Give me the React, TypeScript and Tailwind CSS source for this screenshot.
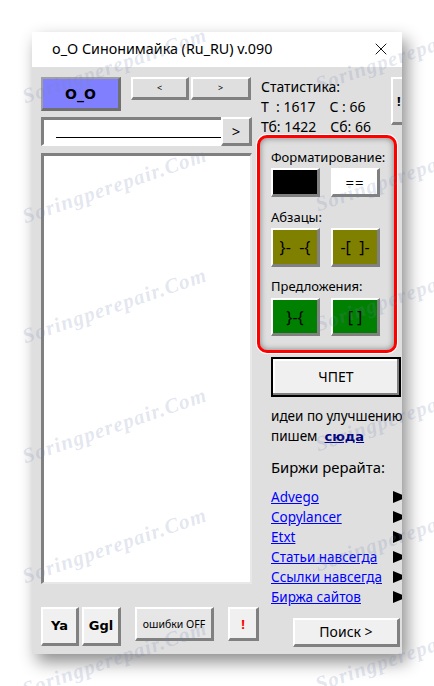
import { X } from 'lucide-react'

const raised =
  'border-t-2 border-l-2 border-r-[3px] border-b-[3px] border-t-white border-l-white border-r-[#808080] border-b-[#808080] flex items-center justify-center shrink-0'

const links = ['Advego', 'Copylancer', 'Etxt', 'Статьи навсегда', 'Ссылки навсегда', 'Биржа сайтов']

const marks = [
  'left-[23px] top-[85px]',
  'left-[23px] top-[205px]',
  'left-[23px] top-[325px]',
  'left-[23px] top-[445px]',
  'left-[23px] top-[565px]',
  'left-[23px] top-[678px]',
  'left-[316px] top-[73px]',
  'left-[316px] top-[193px]',
  'left-[316px] top-[313px]',
  'left-[316px] top-[433px]',
  'left-[316px] top-[553px]',
  'left-[316px] top-[673px]',
]

export default function App() {
  return (
    <div className="relative h-[686px] w-[434px] overflow-hidden bg-white pt-8 pl-8 font-['Noto_Sans',sans-serif] text-[13px] leading-5 text-black">
      <div className="flex h-[622px] w-[370px] flex-col bg-[#dfdfdf] shadow-[5px_8px_16px_rgba(0,0,0,0.45)]">
        <div className="flex h-[35px] shrink-0 items-center justify-between bg-white pr-[11px] pl-5 text-[14.3px]">
          <span className="-mt-[2px]">o_O Синонимайка (Ru_RU) v.090</span>
          <X size={20} strokeWidth={1.1} className="-mt-[2px]" />
        </div>

        <div className="flex min-h-0 flex-1 overflow-hidden pt-[10px] pb-2 pl-[9px]">
          {/* left column */}
          <div className="flex w-[211px] shrink-0 flex-col">
            <div className="flex gap-[10px]">
              <button className="flex h-[34px] w-[80px] shrink-0 items-center justify-center border-t-2 border-l-2 border-r-[3px] border-b-[3px] border-t-[#a0a0a0] border-l-[#a0a0a0] border-r-[#707070] border-b-[#707070] bg-[#8080ff] font-['DejaVu_Sans',sans-serif] text-[14px] font-bold">
                O_O
              </button>
              <div className="flex h-[23px] gap-[2px] text-[9px]">
                <button className={`${raised} w-[58px]`}>&lt;</button>
                <button className={`${raised} w-[60px]`}>&gt;</button>
              </div>
            </div>

            <div className="mt-[6px] flex h-[29px]">
              <div className="flex flex-1 items-end border-t-[3px] border-l-[3px] border-b-2 border-t-[#808080] border-l-[#808080] border-b-white bg-white pb-[6px] pl-[12px]">
                <div className="h-[1px] w-full bg-black" />
              </div>
              <button className={`${raised} w-[31px] text-[15px]`}>&gt;</button>
            </div>

            <div className="mt-[7px] h-[431px] border-t-[3px] border-l-[3px] border-r-2 border-b-2 border-t-[#808080] border-l-[#808080] border-r-[#e8e8e8] border-b-[#e8e8e8] bg-white" />

            <div className="mt-[23px] flex items-start">
              <button className={`${raised} h-[39px] w-[38px] bg-[#f0f0f0] font-['DejaVu_Sans',sans-serif] font-bold`}>Ya</button>
              <button className={`${raised} ml-[3px] h-[39px] w-[39px] bg-[#f0f0f0] font-['DejaVu_Sans',sans-serif] font-bold`}>Ggl</button>
              <button className={`${raised} ml-[14px] h-[34px] w-[79px] bg-[#e6e6e6] text-[10.5px]`}>ошибки OFF</button>
              <button className={`${raised} ml-[14px] h-[34px] w-[31px] bg-[#f0f0f0] font-bold text-[#ff0000]`}>!</button>
            </div>
          </div>

          {/* right column */}
          <div className="ml-[9px] flex w-[141px] shrink-0 flex-col">
            <div className="relative h-[48px] w-[130px] shrink-0 text-[14px] whitespace-pre">
              <p>Статистика:</p>
              <p>Т  : 1617   <span className="ml-[3px]">С : 66</span></p>
              <p>Тб: 1422   <span className="ml-[3px]">Сб: 66</span></p>
              <button className="absolute top-0 left-[130px] flex h-[48px] w-[30px] items-center border-t-2 border-l-2 border-b-[3px] border-t-white border-l-white border-b-[#808080] pl-[4px] text-[13px] font-bold">
                !
              </button>
            </div>

            <div className="mt-[10px] -ml-[4px] h-[218px] w-[140px] shrink-0 rounded-[10px] border-[3px] border-[#ff0000] pt-[9px] pl-[11px] shadow-[0_0_0_1px_#fff,inset_0_0_6px_rgba(0,0,0,0.45)]">
              <p>Форматирование:</p>
              <div className="mt-[1px] flex gap-[11px]">
                <button className={`${raised} h-[29px] w-[49px] bg-black`} />
                <button className={`${raised} h-[29px] w-[49px] bg-white text-[15px] tracking-[1px]`}>==</button>
              </div>
              <p className="mt-[10px]">Абзацы:</p>
              <div className="mt-[1px] flex gap-[11px]">
                <button className={`${raised} h-[39px] w-[49px] bg-[#808000] text-[16px] whitespace-pre`}>{'}-  -{'}</button>
                <button className={`${raised} h-[39px] w-[49px] bg-[#808000] text-[16px] whitespace-pre`}>{'-[  ]-'}</button>
              </div>
              <p className="mt-[9px]">Предложения:</p>
              <div className="mt-[2px] flex gap-[11px]">
                <button className={`${raised} h-[38px] w-[49px] bg-[#008000] text-[16px]`}>{'}-{'}</button>
                <button className={`${raised} h-[38px] w-[49px] bg-[#008000] text-[16px]`}>[ ]</button>
              </div>
            </div>

            <button className="mt-[4px] ml-[10px] flex h-[40px] w-[130px] shrink-0 items-center justify-center border-2 border-black bg-[#f0f0f0] text-[14px] shadow-[inset_-2px_-2px_0_#808080,inset_2px_2px_0_#fff]">
              ЧПЕТ
            </button>

            <div className="ml-[10px] text-[13.5px]">
              <p className="mt-[9px] whitespace-nowrap">идеи по улучшению</p>
              <p className="whitespace-pre">
                пишем  <a className="font-['DejaVu_Sans',sans-serif] text-[13px] font-bold text-[#000080] underline">сюда</a>
              </p>
              <p className="mt-[10px] text-[14.8px]">Биржи рерайта:</p>

              <ul className="mt-[10px]">
                {links.map((link) => (
                  <li key={link} className="relative h-5 w-[131px]">
                    <a className="text-[#0000ff] underline">{link}</a>
                    <span className="absolute top-[4px] left-[122px] h-0 w-0 border-y-[6px] border-l-[14px] border-y-transparent border-l-black" />
                  </li>
                ))}
              </ul>
            </div>

            <button className={`${raised} mt-[11px] ml-[32px] h-[29px] w-[107px] bg-[#f0f0f0] text-[14px]`}>Поиск &gt;</button>
          </div>
        </div>
      </div>

      {marks.map((m) => (
        <span
          key={m}
          className={`pointer-events-none absolute ${m} origin-left -rotate-[19deg] font-['Liberation_Serif',serif] text-[21px] leading-6 font-bold tracking-[1px] whitespace-nowrap text-[#7080b0]/20 italic`}
        >
          Soringperepair.Com
        </span>
      ))}
    </div>
  )
}
